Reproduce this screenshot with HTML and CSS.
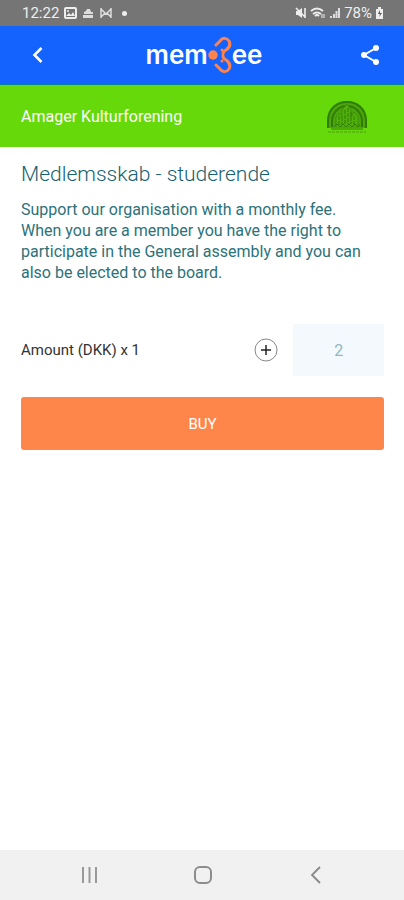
FILE: index.html
```html
<!DOCTYPE html>
<html lang="en">
<head>
    <meta charset="UTF-8">
    <meta name="viewport" content="width=device-width, initial-scale=1.0">
    <title>Membee</title>
    <link rel="stylesheet" href="styles.css">
</head>
<body>
    <div class="status-bar">
        <div class="status-group">
            <span class="clock">12:22</span>
            <svg width="13" height="12" viewBox="0 0 13 12"><rect x="1" y="1" width="11" height="10" rx="1" fill="none" stroke="#eee" stroke-width="2"/><path d="M2 9l3-3 2 2 2-3 2 4z" fill="#eee"/><circle cx="4" cy="4" r="1" fill="#eee"/></svg>
            <svg width="12" height="12" viewBox="0 0 12 12"><path d="M2 7V5l2-1 1-2h3l1 3h2v2zM1 8h10v3H1z" fill="#ddd"/></svg>
            <svg width="14" height="12" viewBox="0 0 14 12"><path d="M2 1v10M12 1v10M2 2l5 5 5-5M2 10l4-4M12 10L8 6" fill="none" stroke="#ddd" stroke-width="1.5"/></svg>
            <span class="dot"></span>
        </div>
        <div class="status-group status-right">
            <svg width="12" height="12" viewBox="0 0 12 12"><path d="M1 4h2l4-3v10L3 8H1z" fill="#eee"/><path d="M1 1l9 9M10 1v10" stroke="#eee" stroke-width="1.6"/></svg>
            <svg width="16" height="12" viewBox="0 0 16 12"><path d="M1 4q6-5 12 0M3 7q4-3 8 0M5 9q2-2 4 0" fill="none" stroke="#eee" stroke-width="2"/><path d="M12 7v4M14 7v4" stroke="#eee"/></svg>
            <svg width="12" height="12" viewBox="0 0 12 12"><path d="M1 9h2v2H1zM4 7h2v4H4z" fill="#ddd"/><path d="M7.500 4v7M10 1v10" stroke="#ddd" stroke-width="2"/></svg>
            <span class="battery-text">78%</span>
            <svg width="9" height="12" viewBox="0 0 9 12"><path d="M3 0h3v2h2v10H1V2h2z" fill="#eee"/><path d="M5 3L3 7h2l-1 3 3-4H5z" fill="#555"/></svg>
        </div>
    </div>

    <header class="app-bar">
        <button class="icon-button" aria-label="Back">
            <svg width="24" height="24" viewBox="0 0 24 24"><path d="M15.500 5L8.500 12l7 7" fill="none" stroke="#fff" stroke-width="2.600"/></svg>
        </button>
        <div class="logo">
            <span>mem</span>
            <svg width="24" height="38" viewBox="0 0 24 38">
                <circle cx="5" cy="19" r="4.700" fill="#ff844b"/>
                <path d="M8 9L12 5C15 1 19 2 21 5C23 9 21 12 18 14C16 15 15 16 15 18M15 20C15 22 16 23 18 24C21 26 23 29 21 33C19 36 15 37 12 33L8 29" fill="none" stroke="#ff844b" stroke-width="3" stroke-linecap="round"/>
                <circle cx="14" cy="14" r="1.500" fill="#ff844b"/>
                <circle cx="14" cy="25" r="1.500" fill="#ff844b"/>
            </svg>
            <span>ee</span>
        </div>
        <button class="icon-button" aria-label="Share">
            <svg width="24" height="24" viewBox="0 0 24 24"><path d="M18 5L6 12l12 7" fill="none" stroke="#fff" stroke-width="2"/><g fill="#fff"><circle cx="18" cy="5" r="3"/><circle cx="6" cy="12" r="3"/><circle cx="18" cy="19" r="3"/></g></svg>
        </button>
    </header>

    <div class="organisation">
        <span>Amager Kulturforening</span>
        <svg width="42" height="33" viewBox="0 0 42 33" fill="none" stroke="#2f7d08">
            <path d="M1 28V20C2 7 11 1 21 1s19 6 20 19v8z" fill="#4ba609" stroke="none"/>
            <path d="M2 28V20C3 8 11 2 21 2s18 6 19 18v8" stroke-width="2"/>
            <path d="M6 27V20C7 12 13 6 21 6s14 6 15 14v7" stroke-width="2"/>
            <path d="M10 26v-9l3-4 3 4v-7l5-6 4 6v7l3-5 4 5v9" fill="#52b00a" stroke="#3b8f08"/>
            <path d="M13 16v9M16 17v8M19 10v14M22 8v16M25 12v12M28 16v9" stroke-dasharray="4 1"/>
            <path d="M8 27l3-3 3 3 3-3 3 3 3-3 3 3 3-3 3 3 2-3M5 29h32"/>
            <path d="M2 32h38" stroke="#46a008" stroke-dasharray="3 1"/>
        </svg>
    </div>

    <main class="content">
        <h1 class="title">Medlemsskab - studerende</h1>
        <p class="description">Support our organisation with a monthly fee. When you are a member you have the right to participate in the General assembly and you can also be elected to the board.</p>
        <form class="purchase">
            <div class="amount-row">
                <label class="amount-label" for="amount">Amount (DKK) x 1</label>
                <button class="plus-button" type="button" aria-label="Add one">
                    <svg width="24" height="24" viewBox="0 0 24 24" fill="none"><circle cx="12" cy="12" r="11" stroke="#888"/><path d="M12 7v10M7 12h10" stroke="#222" stroke-width="1.500"/></svg>
                </button>
                <input class="amount-input" id="amount" type="text" inputmode="numeric" value="2">
            </div>
            <button class="buy-button" type="button">BUY</button>
        </form>
    </main>

    <nav class="nav-bar">
        <button class="icon-button" aria-label="Recent apps">
            <svg width="24" height="24" viewBox="0 0 24 24"><path d="M5 4v16M11.500 4v16M18 4v16" stroke="#999" stroke-width="2"/></svg>
        </button>
        <button class="icon-button" aria-label="Home">
            <svg width="24" height="24" viewBox="0 0 24 24"><rect x="4" y="4" width="16" height="16" rx="5" fill="none" stroke="#8c8c8c" stroke-width="2"/></svg>
        </button>
        <button class="icon-button" aria-label="Previous">
            <svg width="24" height="24" viewBox="0 0 24 24"><path d="M16 4L8 12l8 8" fill="none" stroke="#888" stroke-width="1.800"/></svg>
        </button>
    </nav>
</body>
</html>
```

FILE: styles.css
```css
* {
    box-sizing: border-box;
}
body {
    font-family: Roboto, sans-serif;
    display: flex;
    flex-direction: column;
    min-height: 100vh;
    margin: 0;
    background-color: #ffffff;
    color: #333333;
}
button, input {
    font-family: inherit;
    border: none;
    padding: 0;
}
button {
    cursor: pointer;
}
svg {
    display: block;
    flex: none;
}
.status-bar {
    display: flex;
    justify-content: space-between;
    align-items: center;
    height: 26px;
    padding: 0 20px 0 22px;
    background-color: #757575;
    color: #eeeeee;
    font-size: 15px;
}
.status-group {
    display: flex;
    align-items: center;
    gap: 5px;
}
.status-right {
    gap: 3px;
}
.dot {
    width: 5px;
    height: 5px;
    margin-left: 4px;
    border-radius: 50%;
    background-color: #eeeeee;
}
.app-bar {
    display: flex;
    justify-content: space-between;
    align-items: center;
    height: 59px;
    padding: 0 22px 0 26px;
    background-color: #1463ff;
    border-bottom: 1px solid #087f9c;
}
.icon-button {
    background: none;
}
.logo {
    display: flex;
    align-items: center;
    color: #ffffff;
    font-family: Inter, sans-serif;
    font-size: 26px;
    font-weight: 600;
    line-height: 32px;
}
.organisation {
    display: flex;
    justify-content: space-between;
    align-items: center;
    height: 62px;
    padding: 0 36px 0 21px;
    background-color: #66d90a;
    color: #ffffff;
    font-size: 16px;
}
.content {
    flex: 1;
    padding: 14px 20px 20px 21px;
}
.title {
    margin: 0;
    color: #17616f;
    font-size: 21px;
    font-weight: 300;
    line-height: 26px;
}
.description {
    margin: 12px 0 41px;
    padding-right: 16px;
    color: #2c727a;
    font-size: 16px;
    line-height: 21px;
}
.amount-row {
    display: flex;
    align-items: center;
    gap: 15px;
    margin-bottom: 21px;
}
.amount-label {
    flex: 1;
    font-size: 15px;
}
.plus-button {
    background: none;
}
.amount-input {
    width: 25%;
    height: 52px;
    background-color: #f4f9fd;
    color: #8dbac0;
    font-size: 16px;
    text-align: center;
}
.buy-button {
    display: block;
    width: 100%;
    height: 53px;
    border-radius: 3px;
    background-color: #ff864a;
    color: #ffffff;
    font-size: 15px;
}
.nav-bar {
    display: flex;
    justify-content: space-between;
    align-items: center;
    height: 50px;
    padding: 0 76px 0 78px;
    background-color: #f1f1f1;
}
```
